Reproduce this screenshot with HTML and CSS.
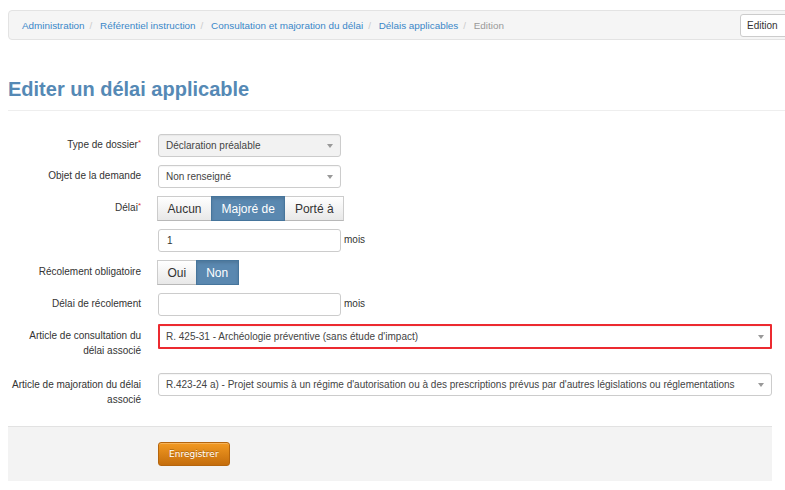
FILE: index.html
```html
<!DOCTYPE html>
<html lang="fr">
<head>
<meta charset="utf-8">
<title>Editer un délai applicable</title>
<link rel="stylesheet" href="styles.css">
</head>
<body>
<div class="page">
  <nav class="breadcrumb">
    <ol class="crumbs">
      <li><a href="#">Administration</a></li>
      <li><a href="#">Référentiel instruction</a></li>
      <li><a href="#">Consultation et majoration du délai</a></li>
      <li><a href="#">Délais applicables</a></li>
      <li class="current">Edition</li>
    </ol>
    <button class="mode-btn" type="button">Edition</button>
  </nav>

  <h1 class="page-title">Editer un délai applicable</h1>

  <form class="form">
    <div class="fields">
      <div class="row">
        <label class="label">Type de dossier<span class="req">*</span></label>
        <div class="control">
          <div class="select select-sm disabled"><span class="val">Déclaration préalable</span><span class="caret"></span></div>
        </div>
      </div>
      <div class="row">
        <label class="label">Objet de la demande</label>
        <div class="control">
          <div class="select select-sm"><span class="val">Non renseigné</span><span class="caret"></span></div>
        </div>
      </div>
      <div class="row">
        <label class="label">Délai<span class="req">*</span></label>
        <div class="control">
          <div class="btn-group">
            <button type="button" class="btn">Aucun</button>
            <button type="button" class="btn active">Majoré de</button>
            <button type="button" class="btn">Porté à</button>
          </div>
        </div>
      </div>
      <div class="row">
        <label class="label"></label>
        <div class="control">
          <div class="input">1</div><span class="unit">mois</span>
        </div>
      </div>
      <div class="row">
        <label class="label">Récolement obligatoire</label>
        <div class="control">
          <div class="btn-group">
            <button type="button" class="btn">Oui</button>
            <button type="button" class="btn active">Non</button>
          </div>
        </div>
      </div>
      <div class="row">
        <label class="label">Délai de récolement</label>
        <div class="control">
          <div class="input"></div><span class="unit">mois</span>
        </div>
      </div>
      <div class="row row-multi row-consult">
        <label class="label">Article de consultation du délai associé</label>
        <div class="control">
          <div class="select select-wide invalid"><span class="val">R. 425-31 - Archéologie préventive (sans étude d'impact)</span><span class="caret"></span></div>
        </div>
      </div>
      <div class="row row-multi">
        <label class="label">Article de majoration du délai associé</label>
        <div class="control">
          <div class="select select-wide"><span class="val">R.423-24 a) - Projet soumis à un régime d'autorisation ou à des prescriptions prévus par d'autres législations ou réglementations</span><span class="caret"></span></div>
        </div>
      </div>
    </div>
    <div class="form-actions">
      <button type="button" class="btn-save">Enregistrer</button>
    </div>
  </form>
</div>
</body>
</html>
```
FILE: styles.css
```css
html, body {
  margin: 0;
  padding: 0;
  overflow: hidden;
  background: #fff;
}
body {
  font-family: "Liberation Sans", Arial, sans-serif;
  color: #333;
  font-size: 10px;
}
.page {
  padding: 10px 0 0 8px;
  width: 812px;
}

/* breadcrumb */
.breadcrumb {
  box-sizing: border-box;
  width: 812px;
  height: 30px;
  display: flex;
  align-items: center;
  padding: 0 13px;
  background: #f5f5f5;
  border: 1px solid #e3e3e3;
  border-radius: 4px;
}
.crumbs {
  list-style: none;
  margin: 0;
  padding: 0;
  display: flex;
  font-size: 9.9px;
}
.crumbs li + li::before {
  content: "/\00a0";
  padding: 0 5px;
  color: #ccc;
}
.crumbs a {
  color: #3a87c8;
  text-decoration: none;
}
.crumbs .current {
  color: #999;
}
.mode-btn {
  margin-left: auto;
  box-sizing: border-box;
  width: 66px;
  height: 23px;
  padding: 0 6px;
  text-align: left;
  font-family: inherit;
  font-size: 10px;
  color: #333;
  background: #fff;
  border: 1px solid #ccc;
  border-radius: 3px;
}

/* title */
.page-title {
  margin: 38px 0 0;
  padding-bottom: 9px;
  font-size: 20px;
  line-height: 23px;
  font-weight: bold;
  color: #5589b5;
  border-bottom: 1px solid #eee;
}

/* form */
.form {
  width: 764px;
  margin-top: 23px;
}
.fields {
  display: flex;
  flex-direction: column;
  gap: 8px;
}
.row {
  display: grid;
  grid-template-columns: 133px 1fr;
  column-gap: 17px;
  align-items: center;
}
.row-multi {
  align-items: start;
}
.row-multi .label {
  padding-top: 5px;
}
.row-consult {
  margin-bottom: 7px;
}
.label {
  text-align: right;
  font-size: 10px;
  line-height: 14.5px;
  color: #333;
}
.req {
  color: #e0302a;
  font-size: 8px;
  vertical-align: top;
  line-height: 10px;
}
.control {
  display: flex;
  align-items: center;
}

/* select */
.select {
  box-sizing: border-box;
  height: 23px;
  display: flex;
  align-items: center;
  padding: 0 7px 0 7px;
  background: #fff;
  border: 1px solid #ccc;
  border-radius: 3px;
  font-size: 10px;
  color: #444;
  box-shadow: inset 0 1px 1px rgba(0,0,0,0.04);
}
.select .val {
  flex: 1;
  white-space: nowrap;
  overflow: hidden;
}
.select .caret {
  width: 0;
  height: 0;
  border-left: 3px solid transparent;
  border-right: 3px solid transparent;
  border-top: 4px solid #999;
}
.select-sm {
  width: 183px;
}
.select-wide {
  width: 614px;
}
.select.disabled {
  background: #f2f2f2;
}
.select.invalid {
  height: 25px;
  border: 2px solid #ec2a30;
  border-radius: 1px;
  padding-left: 6px;
  padding-right: 6px;
}

/* input */
.input {
  box-sizing: border-box;
  width: 183px;
  height: 23px;
  display: flex;
  align-items: center;
  padding: 0 8px;
  background: #fff;
  border: 1px solid #ccc;
  border-radius: 3px;
  font-size: 10px;
  color: #333;
}
.unit {
  margin-left: 3px;
  font-size: 10px;
  color: #333;
  position: relative;
  top: -1px;
}

/* button group */
.btn-group {
  display: flex;
  margin-left: -1px;
}
.btn {
  height: 25px;
  padding: 0 9.5px;
  font-family: "Liberation Sans", Arial, sans-serif;
  font-size: 12px;
  color: #333;
  background: linear-gradient(#ffffff, #e8e8e8);
  border: 1px solid #ccc;
  border-bottom-color: #b8b8b8;
  margin-left: -1px;
}
.btn:first-child {
  margin-left: 0;
}
.btn.active {
  color: #fff;
  background: #5a88b0;
  border-color: #46759c;
  box-shadow: inset 0 2px 3px rgba(0,0,0,0.12);
  position: relative;
}

/* actions */
.form-actions {
  margin-top: 19px;
  padding: 15px 0 15px 150px;
  background: #f3f3f3;
  border-top: 1px solid #e2e2e2;
}
.btn-save {
  height: 24px;
  padding: 0 10px;
  font-family: "DejaVu Sans", Verdana, sans-serif;
  font-size: 9px;
  color: #fff;
  text-shadow: 0 -1px 0 rgba(0,0,0,0.25);
  background: linear-gradient(#f39a22, #c46d0c);
  border: 1px solid #b5650d;
  border-radius: 3px;
  box-shadow: inset 0 1px 0 rgba(255,255,255,0.25);
}
```
